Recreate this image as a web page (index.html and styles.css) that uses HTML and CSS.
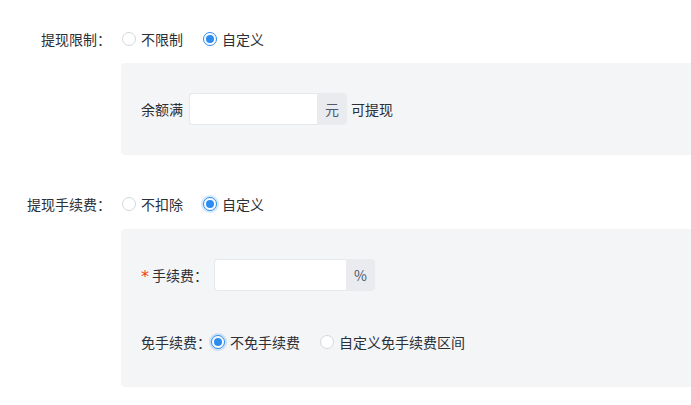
FILE: index.html
```html
<!DOCTYPE html>
<html lang="zh">
<head>
  <meta charset="UTF-8" />
  <title>提现设置</title>
  <link rel="stylesheet" href="styles.css">
</head>
<body>
  <div class="form">
    <!-- 提现限制 -->
    <div class="form-item first">
      <div class="form-label">提现限制：</div>
      <div class="form-content">
        <div class="radio-group">
          <label class="radio"><span class="radio-inner"></span>不限制</label>
          <label class="radio checked"><span class="radio-inner"></span>自定义</label>
        </div>
        <div class="sub-panel">
          <div class="inline-row">
            <span class="inline-text">余额满</span>
            <div class="input-group">
              <input class="input" type="text">
              <span class="addon">元</span>
            </div>
            <span class="inline-text after">可提现</span>
          </div>
        </div>
      </div>
    </div>

    <!-- 提现手续费 -->
    <div class="form-item second">
      <div class="form-label">提现手续费：</div>
      <div class="form-content">
        <div class="radio-group">
          <label class="radio"><span class="radio-inner"></span>不扣除</label>
          <label class="radio checked focus"><span class="radio-inner"></span>自定义</label>
        </div>
        <div class="sub-panel tall">
          <div class="inline-row">
            <span class="inline-text"><span class="required">*</span>手续费：</span>
            <div class="input-group wide">
              <input class="input" type="text">
              <span class="addon">%</span>
            </div>
          </div>
          <div class="inline-row free-row">
            <span class="inline-text tight">免手续费：</span>
            <label class="radio checked focus"><span class="radio-inner"></span>不免手续费</label>
            <label class="radio"><span class="radio-inner"></span>自定义免手续费区间</label>
          </div>
        </div>
      </div>
    </div>
  </div>
</body>
</html>
```

FILE: styles.css
```css
body {
  margin: 0;
  font-family: "Noto Sans CJK SC", "Liberation Sans", sans-serif;
  font-size: 14px;
  color: #515a6e;
  background: #fff;
}

.form-item {
  display: flex;
  align-items: flex-start;
}

.form-item.first {
  margin-top: 23px;
}

.form-item.second {
  margin-top: 33px;
}

.form-label {
  width: 111px;
  padding-right: 10px;
  text-align: right;
  line-height: 32px;
  color: #2b2f36;
  flex-shrink: 0;
}

.form-content {
  flex: 1;
}

.radio-group {
  display: flex;
  align-items: center;
  height: 32px;
  padding-left: 1px;
}

.radio {
  display: inline-flex;
  align-items: center;
  margin-right: 20px;
  line-height: 32px;
  color: #2b2f36;
  cursor: pointer;
}

.radio-inner {
  position: relative;
  width: 14px;
  height: 14px;
  box-sizing: border-box;
  border: 1px solid #d4d7dc;
  border-radius: 50%;
  background: #fff;
  margin-right: 5px;
}

.radio.checked .radio-inner {
  border-color: #2d8cf0;
}

.radio.checked .radio-inner::after {
  content: "";
  position: absolute;
  left: 2px;
  top: 2px;
  width: 8px;
  height: 8px;
  border-radius: 50%;
  background: #2d8cf0;
}

.radio.focus .radio-inner {
  box-shadow: 0 0 0 2px rgba(45, 140, 240, 0.2);
}

.sub-panel {
  margin-top: 8px;
  background: #f4f5f7;
  border-radius: 4px 0 0 4px;
  padding: 30px 20px;
}

.sub-panel.tall {
  margin-top: 9px;
  padding-bottom: 29px;
}

.inline-row {
  display: flex;
  align-items: center;
  height: 32px;
}

.free-row {
  margin-top: 35px;
}

.inline-text {
  display: inline-flex;
  align-items: center;
  margin-right: 6px;
  color: #2b2f36;
}

.inline-text.tight {
  margin-right: 0;
}

.inline-text.after {
  margin-left: 4px;
}

.required {
  color: #ed4014;
  margin-right: 3px;
  font-size: 16px;
  line-height: 1;
  position: relative;
  top: 2px;
  font-family: "DejaVu Sans", sans-serif;
}

.input-group {
  display: flex;
  height: 32px;
}

.input {
  width: 128px;
  height: 32px;
  box-sizing: border-box;
  border: 1px solid #e6e8eb;
  border-right: none;
  border-radius: 4px 0 0 4px;
  background: #fff;
  padding: 0 7px;
  font-size: 14px;
  outline: none;
}

.input-group.wide .input {
  width: 132px;
}

.addon {
  display: flex;
  align-items: center;
  padding: 0 8px;
  background: #e9ebee;
  border-radius: 0 4px 4px 0;
  color: #515a6e;
}
```
